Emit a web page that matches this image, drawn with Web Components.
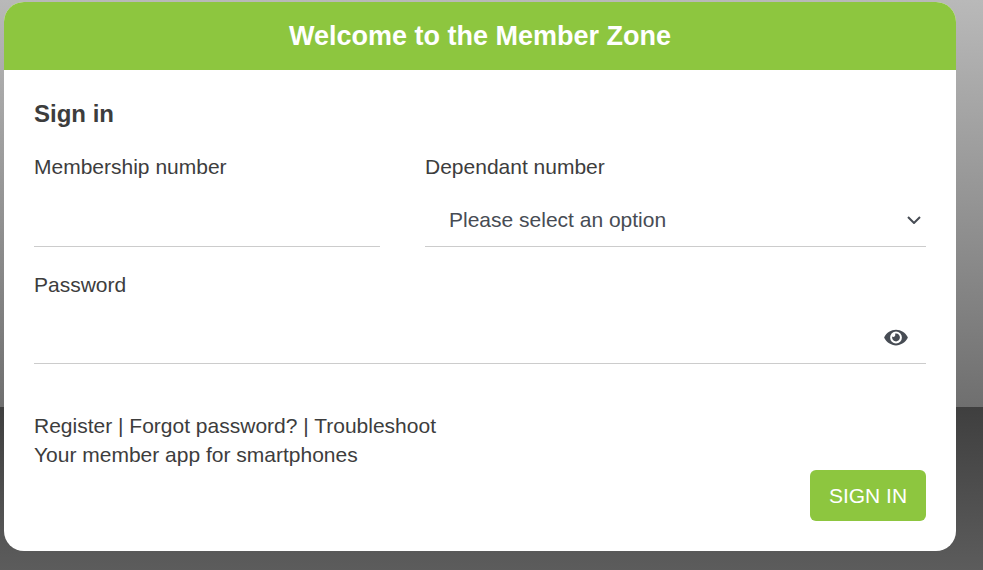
<!DOCTYPE html>
<html lang="en">
<head>
<meta charset="utf-8">
<title>Member Zone</title>
<style>
  html, body { margin: 0; height: 570px; overflow: hidden; }
  body {
    padding: 2px 0 0 4px;
    box-sizing: border-box;
    font-family: "Liberation Sans", Arial, sans-serif;
    color: #3d3d3d;
    background: linear-gradient(to bottom, #b9b9b9 0, #6f6f6f 407px, #3f3f3f 407px, #5c5c5c 570px) no-repeat;
  }
  sign-links a { color: inherit; text-decoration: none; }
</style>
</head>
<body>
<template id="member-card-tpl">
  <style>
    :host { display: block; width: 952px; height: 549px; background: #fff; border-radius: 20px; overflow: hidden; }
    header { height: 68px; display: flex; align-items: center; justify-content: center; background: #8dc63f; color: #fff; font-size: 27px; font-weight: bold; }
    .body { padding: 30px 30px 30px; box-sizing: border-box; height: 481px; display: flex; flex-direction: column; }
  </style>
  <header><slot name="title"></slot></header>
  <div class="body"><slot></slot></div>
</template>

<template id="text-field-tpl">
  <style>
    :host { display: block; }
    label { display: block; font-size: 21px; line-height: 28px; }
    .control { height: var(--control-h, 65px); box-sizing: border-box; border-bottom: 1px solid #cccccc; display: flex; align-items: flex-end; justify-content: flex-end; padding: 0 18px 15.5px 0; }
    input { position: absolute; width: 0; height: 0; border: 0; padding: 0; opacity: 0; }
    svg { display: block; width: 24px; height: 21px; fill: #474c54; }
    :host(:not([secret])) svg { display: none; }
  </style>
  <label></label>
  <div class="control">
    <input>
    <svg viewBox="0 0 576 512"><path d="M572.52 241.4C518.29 135.59 410.93 64 288 64S57.68 135.64 3.48 241.41a32.35 32.35 0 0 0 0 29.19C57.71 376.41 165.07 448 288 448s230.32-71.64 284.52-177.41a32.35 32.35 0 0 0 0-29.19zM288 400a144 144 0 1 1 144-144 143.93 143.93 0 0 1-144 144zm0-240a95.31 95.31 0 0 0-25.31 3.79 47.85 47.85 0 0 1-66.9 66.9A95.78 95.78 0 1 0 288 160z"/></svg>
  </div>
</template>

<template id="select-field-tpl">
  <style>
    :host { display: block; }
    label { display: block; font-size: 21px; line-height: 28px; }
    .control { height: var(--control-h, 65px); box-sizing: border-box; border-bottom: 1px solid #cccccc; display: flex; align-items: center; justify-content: space-between; padding: 13px 5px 0 24px; color: #474c54; font-size: 21px; }
    svg { display: block; width: 14px; height: 8px; fill: none; stroke: #474c54; stroke-width: 2; }
  </style>
  <label></label>
  <div class="control">
    <span><slot></slot></span>
    <svg viewBox="0 0 14 8"><path d="M1 1l6 6 6-6"/></svg>
  </div>
</template>

<template id="sign-button-tpl">
  <style>
    :host { display: block; width: 116px; height: 51px; align-self: flex-end; margin-top: auto; }
    button { width: 100%; height: 100%; padding: 0; border: 0; border-radius: 6px; background: #8dc63f; color: #fff; font: 21px "Liberation Sans", Arial, sans-serif; }
  </style>
  <button><slot></slot></button>
</template>

<template id="sign-links-tpl">
  <style>
    :host { display: block; margin-top: 47px; font-size: 21px; line-height: 29px; }
    ::slotted(div) { display: block; }
  </style>
  <slot></slot>
</template>

<template id="sign-form-tpl">
  <style>
    :host { display: block; flex: 1; display: flex; flex-direction: column; }
    h2 { margin: -1px 0 24px; font-size: 24px; line-height: 30px; font-weight: bold; }
    .row { display: grid; grid-template-columns: 346px 501px; column-gap: 45px; margin-bottom: 24px; --control-h: 66px; }
  </style>
  <h2><slot name="heading"></slot></h2>
  <div class="row"><slot name="left"></slot><slot name="right"></slot></div>
  <slot></slot>
</template>

<member-card>
  <span slot="title">Welcome to the Member Zone</span>
  <sign-form>
    <span slot="heading">Sign in</span>
    <text-field slot="left" label="Membership number"></text-field>
    <select-field slot="right" label="Dependant number">Please select an option</select-field>
    <text-field label="Password" secret></text-field>
    <sign-links>
      <div><a href="#">Register</a> | <a href="#">Forgot password?</a> | <a href="#">Troubleshoot</a></div>
      <div><a href="#">Your member app for smartphones</a></div>
    </sign-links>
    <sign-button>SIGN IN</sign-button>
  </sign-form>
</member-card>

<script>
  function component(name, tpl) {
    customElements.define(name, class extends HTMLElement {
      connectedCallback() {
        if (this.shadowRoot) return;
        this.attachShadow({ mode: 'open' });
        this.shadowRoot.appendChild(document.getElementById(tpl).content.cloneNode(true));
        const label = this.shadowRoot.querySelector('label');
        if (label) label.textContent = this.getAttribute('label') || '';
        const input = this.shadowRoot.querySelector('input');
        if (input && this.hasAttribute('secret')) input.type = 'password';
      }
    });
  }
  component('member-card', 'member-card-tpl');
  component('sign-form', 'sign-form-tpl');
  component('text-field', 'text-field-tpl');
  component('select-field', 'select-field-tpl');
  component('sign-links', 'sign-links-tpl');
  component('sign-button', 'sign-button-tpl');
</script>
</body>
</html>
